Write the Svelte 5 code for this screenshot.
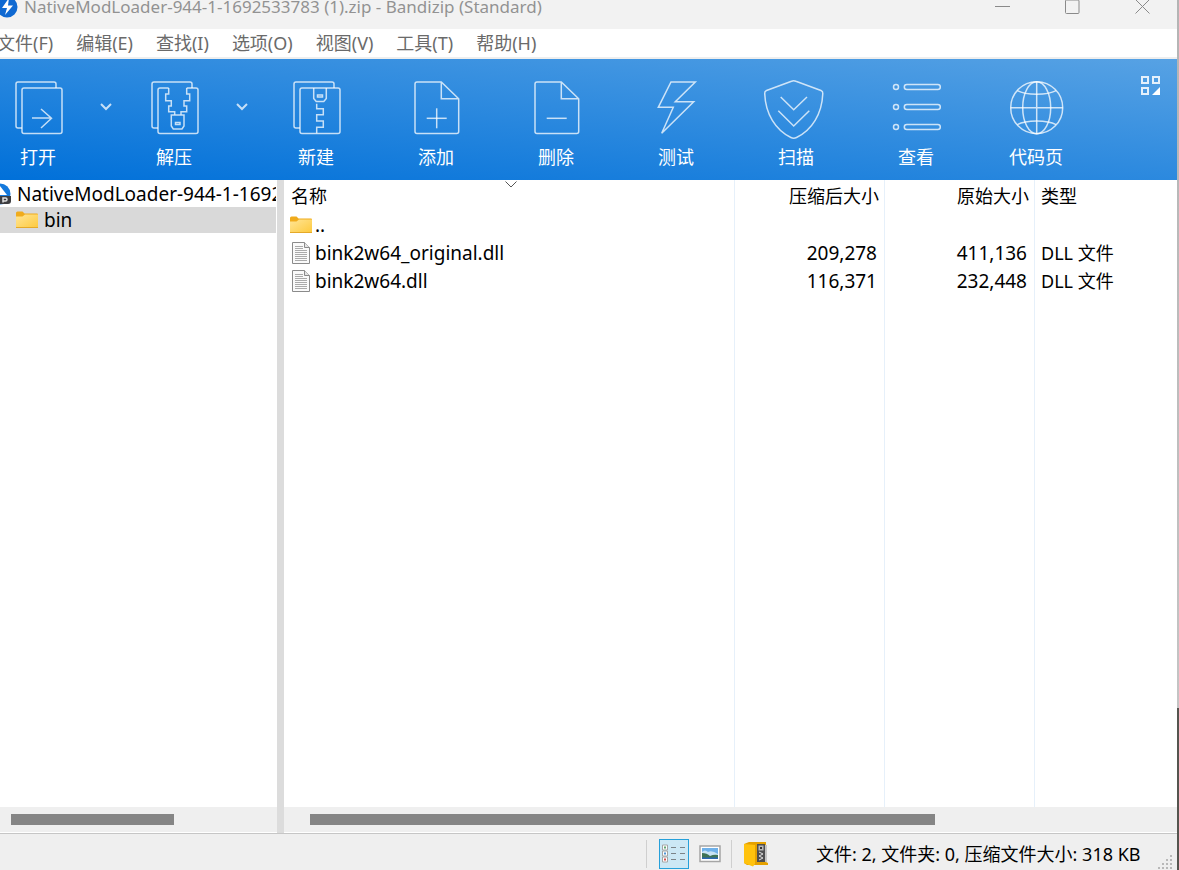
<script lang="ts">
    // ArchiveWindow: main window of the archiver. Toolbar on top,
    // folder tree on the left, archive entries on the right.

    type Entry = {
        name: string;
        kind: 'up' | 'file';
        packed: string;
        size: string;
        type: string;
    };

    const title = 'NativeModLoader-944-1-1692533783 (1).zip - Bandizip (Standard)';
    const menus = ['文件(F)', '编辑(E)', '查找(I)', '选项(O)', '视图(V)', '工具(T)', '帮助(H)'];

    const tools = [
        { id: 'open', label: '打开', menu: true },
        { id: 'extract', label: '解压', menu: true },
        { id: 'new', label: '新建', menu: false },
        { id: 'add', label: '添加', menu: false },
        { id: 'delete', label: '删除', menu: false },
        { id: 'test', label: '测试', menu: false },
        { id: 'scan', label: '扫描', menu: false },
        { id: 'view', label: '查看', menu: false },
        { id: 'codepage', label: '代码页', menu: false }
    ];

    const entries: Entry[] = [
        { name: '..', kind: 'up', packed: '', size: '', type: '' },
        { name: 'bink2w64_original.dll', kind: 'file', packed: '209,278', size: '411,136', type: 'DLL 文件' },
        { name: 'bink2w64.dll', kind: 'file', packed: '116,371', size: '232,448', type: 'DLL 文件' }
    ];

    let viewMode = $state<'list' | 'image'>('list');
    let folder = $state('bin');
</script>

{#snippet folderIcon()}
    <svg class="folder" width="22" height="18" viewBox="0 0 22 18" aria-hidden="true">
        <defs>
            <linearGradient id="folder-fill" x1="0" y1="0" x2="1" y2="1">
                <stop offset="0" stop-color="#ffe596" />
                <stop offset="1" stop-color="#fdc93c" />
            </linearGradient>
        </defs>
        <path d="M0 2a1.5 1.5 0 0 1 1.5-1.5h5L8.5 2.5H21a1 1 0 0 1 1 1V8H0z" fill="#f0ab1c" />
        <path d="M0 5.5h6.500L9 3.500h13V16a1 1 0 0 1-1 1H1a1 1 0 0 1-1-1z" fill="url(#folder-fill)" />
        <path d="M0 16.5h22" stroke="#e5a928" />
    </svg>
{/snippet}

{#snippet fileIcon()}
    <svg class="file" width="18" height="22" viewBox="0 0 18 22" aria-hidden="true">
        <path d="M.5.5h12l5 5v16H.5z" fill="#fafafa" stroke="#8b8b8b" />
        <path d="M12.5.5v5h5" fill="#e4e4e4" stroke="#8b8b8b" />
        <path d="M3 4.5h8M3 6.5h8M3 8.5h12M3 10.5h12M3 12.5h12M3 14.5h12M3 16.5h12M3 18.5h12" stroke="#aaa" />
    </svg>
{/snippet}

{#snippet toolIcon(id: string)}
    <svg class="tool-icon" width="60" height="60" viewBox="0 0 60 60" aria-hidden="true">
        {#if id === 'open' || id === 'extract' || id === 'new'}
            <path d="M14 50H10a2 2 0 0 1-2-2V6a2 2 0 0 1 2-2h36a2 2 0 0 1 2 2v4" />
        {/if}
        {#if id === 'open'}
            <rect x="14" y="10" width="40" height="45.5" rx="2" />
            <path d="M24 40h19.5M33 31l10.5 9.3L33 50" />
        {:else if id === 'extract'}
            <path d="M24.7 10H16a2 2 0 0 0-2 2v41.5a2 2 0 0 0 2 2h36a2 2 0 0 0 2-2V12a2 2 0 0 0-2-2h-9.3" />
            <path d="M24.7 10v6h-3v6.7h5.6V28h-2.6v5.7h6v3M42.7 10v6h3v6.7H40V28h2.7v5.7H37v3" />
            <path d="M27.3 37H40v11l-2 3h-8.7l-2-3z" />
            <rect x="31.5" y="44.5" width="4.5" height="2" />
        {:else if id === 'new'}
            <rect x="14" y="10" width="40" height="45.5" rx="2" />
            <path d="M27.7 10v10.5l2.5 3h7.6l2.5-3V10" />
            <rect x="31.5" y="17" width="5" height="2" />
            <path d="M30.7 25.7v5h6.6v6h-6.6V43h6.6v6.3h-6.6v6" />
        {:else if id === 'add' || id === 'delete'}
            <path d="M35.3 4H11a2 2 0 0 0-2 2v47.5a2 2 0 0 0 2 2h39.7a2 2 0 0 0 2-2V20.7zV20.7h17.4" />
            <path d="M20.7 40.3h20" />
            {#if id === 'add'}<path d="M30.7 30.3v20" />{/if}
        {:else if id === 'test'}
            <path d="M25 4h24.3l-20 19.7h18.4l-32 31.6 11.6-26h-15z" />
        {:else if id === 'scan'}
            <path d="M25.5 3.2q2.200-1 4.400 0L55 12.5q2 .8 1.8 3C56 36 46 52 30.5 59.5q-2.800 1.400-5.600 0C9.5 52-.5 36-1.300 15.5q-.2-2.200 1.800-3z" />
            <path d="M14.7 19l13 12.7L41 19M12.3 32.7L27.7 48l15.6-15.3" />
        {:else if id === 'view'}
            {#each [9, 29, 49] as y}
                <circle cx="10" cy={y} r="2.5" />
                <rect x="18.3" y={y - 2.5} width="36" height="5" rx="2.5" />
            {/each}
        {:else if id === 'codepage'}
            <circle cx="30.7" cy="29.7" r="26" />
            <path d="M30.7 3.7v52M4.7 29.7h52" />
            <ellipse cx="30.7" cy="29.7" rx="14" ry="26" />
            <path d="M11.3 12.7c9 4.8 29.8 4.8 38.8 0M11.3 46.7c9-4.800 29.8-4.800 38.8 0" />
        {/if}
    </svg>
{/snippet}

<div class="desktop">
    <main class="window">
        <header class="titlebar">
            <svg class="logo" width="22" height="22" viewBox="0 0 22 22" aria-hidden="true">
                <circle cx="11" cy="11" r="10.5" fill="#0f69d2" />
                <path d="M13 2L6 12h5l-2 7 8-9.500h-5z" fill="#fff" />
            </svg>
            <h1>{title}</h1>
            <div class="caption">
                <button aria-label="最小化">
                    <svg width="16" height="16" viewBox="0 0 16 16"><path d="M0 7.5h15" /></svg>
                </button>
                <button aria-label="最大化">
                    <svg width="16" height="16" viewBox="0 0 16 16"><rect x=".5" y="1" width="13.5" height="13.5" rx="1" /></svg>
                </button>
                <button aria-label="关闭">
                    <svg width="16" height="16" viewBox="0 0 16 16"><path d="M.5.5l14 14M14.5.5l-14 14" /></svg>
                </button>
            </div>
        </header>

        <nav class="menubar">
            {#each menus as m}
                <button>{m}</button>
            {/each}
        </nav>

        <div class="toolbar" role="toolbar" aria-label="工具">
            {#each tools as t (t.id)}
                <button class="tool" class:split={t.menu}>
                    {@render toolIcon(t.id)}
                    <span>{t.label}</span>
                </button>
                {#if t.menu}
                    <button class="drop" aria-label={t.label + '菜单'}>
                        <svg width="12" height="8" viewBox="0 0 12 8"><path d="M1 1l5 5 5-5" /></svg>
                    </button>
                {/if}
            {/each}
            <button class="layout" aria-label="布局">
                <svg width="20" height="20" viewBox="0 0 20 20">
                    <path d="M1 1h6v6H1zM12 1h6v6h-6zM1 12h6v6H1z" />
                    <path class="solid" d="M19 11v8h-8z" />
                </svg>
            </button>
        </div>

        <div class="panes">
            <section class="pane tree-pane">
                <ul class="tree">
                    <li>
                        <button onclick={() => (folder = '')}>
                            <svg class="zip" width="22" height="22" viewBox="0 0 22 22" aria-hidden="true">
                                <circle cx="11" cy="11" r="10.5" fill="#1479dc" />
                                <path d="M11 3l7 9h-7z" fill="#fff" />
                                <path d="M0 13h22v5a3 3 0 0 1-3 3H3a3 3 0 0 1-3-3z" fill="#3d3d40" />
                                <path d="M14 19.5v-4.500h2.500a1.5 1.5 0 0 1 0 3H14" fill="none" stroke="#ddd" stroke-width="1.5" />
                            </svg>
                            <span>NativeModLoader-944-1-1692533783 (1).zip</span>
                        </button>
                    </li>
                    <li>
                        <button class="child" class:selected={folder === 'bin'} onclick={() => (folder = 'bin')}>
                            {@render folderIcon()}
                            <span>bin</span>
                        </button>
                    </li>
                </ul>
                <div class="scroll tree-scroll"><div class="thumb"></div></div>
            </section>

            <div class="splitter"></div>

            <section class="pane list-pane">
                <div class="list">
                    <table>
                        <thead>
                            <tr>
                                <th class="name">
                                    名称
                                    <svg class="sort" width="12" height="7" viewBox="0 0 12 7" aria-hidden="true"><path d="M.5.5L6 6 11.5.5" /></svg>
                                </th>
                                <th class="num">压缩后大小</th>
                                <th class="num">原始大小</th>
                                <th class="type">类型</th>
                            </tr>
                        </thead>
                        <tbody>
                            {#each entries as e (e.name)}
                                <tr>
                                    <td class="name">
                                        <div class="entry">
                                            {#if e.kind === 'up'}{@render folderIcon()}{:else}{@render fileIcon()}{/if}
                                            <span>{e.name}</span>
                                        </div>
                                    </td>
                                    <td class="num">{e.packed}</td>
                                    <td class="num">{e.size}</td>
                                    <td class="type">{e.type}</td>
                                </tr>
                            {/each}
                            <!-- stretches so the column rules reach the scrollbar -->
                            <tr class="filler"><td></td><td></td><td></td><td></td></tr>
                        </tbody>
                    </table>
                </div>
                <div class="scroll list-scroll"><div class="thumb"></div></div>
            </section>
        </div>

        <footer class="status">
            <div class="modes">
                <button class:active={viewMode === 'list'} aria-label="列表" onclick={() => (viewMode = 'list')}>
                    <svg width="26" height="24" viewBox="0 0 26 24">
                        <path d="M1.5 3h5v5h-5zM1.5 9h5v5h-5zM1.5 15h5v5h-5z" fill="#fff" stroke="#a4a4a4" />
                        <path d="M3 5.5h2" stroke="#62a370" stroke-width="2" />
                        <path d="M3 11.5h2" stroke="#4e95d6" stroke-width="2" />
                        <path d="M3 17.5h2" stroke="#d34f4c" stroke-width="2" />
                        <path d="M10 5.5h5M19 5.5h5M10 11.5h5M19 11.5h5M10 17.5h5M19 17.5h5" stroke="#7b8388" />
                    </svg>
                </button>
                <button class:active={viewMode === 'image'} aria-label="图片" onclick={() => (viewMode = 'image')}>
                    <svg width="22" height="18" viewBox="0 0 22 18">
                        <rect x="1" y="1" width="20" height="15.5" fill="#fff" stroke="#a5a5a5" stroke-width="1.5" />
                        <path d="M3 3h16v11H3z" fill="#6fb1ea" />
                        <path d="M3 7q3-3 6 0 4-2 10 2v2H3z" fill="#c8e3f5" />
                        <path d="M3 8q5 0 8 3 4-2 8-1v4H3z" fill="#3f7356" />
                        <path d="M3 12.5h16V14H3z" fill="#2a67b4" />
                    </svg>
                </button>
            </div>
            <button class="archive" aria-label="压缩包">
                <svg width="26" height="26" viewBox="0 0 26 26">
                    <path d="M1 3l5-2h17v20l2 1v2H4L1 22z" fill="#e5a100" />
                    <path d="M14 3h8v18h-8z" fill="#4e4e50" />
                    <path d="M15.5 4.500h5v5h-5z" fill="#b8b8b8" />
                    <path d="M17 6h2v2h-2z" fill="#333" />
                    <path d="M16 11l4 2-4 2 4 2-4 2" fill="none" stroke="#ddd" />
                    <path d="M22 4h2v17h-2z" fill="#c4c4c4" />
                    <path d="M1 3l11 1v19l-2 2.5L1 22z" fill="#ffc20d" />
                </svg>
            </button>
            <p>文件: 2, 文件夹: 0, 压缩文件大小: 318 KB</p>
            <svg class="grip" width="16" height="16" viewBox="0 0 16 16" aria-hidden="true">
                <path d="M13 1h2v2h-2zM13 5h2v2h-2zM9 5h2v2H9zM13 9h2v2h-2zM9 9h2v2H9zM5 9h2v2H5zM13 13h2v2h-2zM9 13h2v2H9zM5 13h2v2H5zM1 13h2v2H1z" fill="#b9b9b9" />
            </svg>
        </footer>
    </main>
    <div class="edge"></div>
</div>

<style>
    :global(body) {
        background: #efefef;
        overflow: hidden;
    }

    .desktop {
        display: grid;
        grid-template-columns: minmax(0, 1fr) 2px;
        height: 100vh;
        font-family: 'Noto Sans', 'Noto Sans CJK SC', sans-serif;
        font-size: 18px;
        line-height: 26px;
        color: #000;
    }
    .edge {
        background: linear-gradient(#b4b4b4 0, #c4c4c4 708px, #55554f 708px);
    }
    .window {
        display: flex;
        flex-direction: column;
        min-height: 0;
        background: #fff;
    }

    button {
        padding: 0;
        border: 0;
        background: none;
        color: inherit;
        font: inherit;
    }
    svg {
        display: block;
        flex-shrink: 0;
    }

    /* ---------- title bar, menu ---------- */
    .titlebar {
        display: flex;
        align-items: center;
        height: 14px;
        padding-bottom: 15px;
        overflow: hidden;
        background: #f2f2f2;
        color: #929292;
    }
    .logo {
        margin-left: -4px;
    }
    h1 {
        margin: 0 0 0 6px;
        font-size: 17px;
        font-weight: 400;
        white-space: nowrap;
    }
    .caption {
        display: flex;
        gap: 54px;
        margin-left: auto;
        margin-right: 26px;
    }
    .caption svg {
        fill: none;
        stroke: #8a8a8a;
    }
    .menubar {
        display: flex;
        gap: 23px;
        height: 28px;
        padding-bottom: 2px;
        margin-left: -3px;
        background: linear-gradient(to top, #eee 2px, #fff 2px);
        box-sizing: content-box;
        color: #6a6a6a;
    }

    /* ---------- toolbar ---------- */
    .toolbar {
        display: flex;
        height: 121px;
        background: linear-gradient(to top right, #0070d9, #57a2e4);
        color: #fff;
    }
    .tool {
        display: flex;
        flex-direction: column;
        align-items: center;
        gap: 6px;
        width: 88px;
        margin-right: 32px;
        padding-top: 19px;
    }
    .tool.split {
        width: 76px;
        margin-right: 0;
    }
    .tool-icon {
        overflow: visible;
        fill: none;
        stroke: #fff;
        stroke-opacity: 0.75;
        stroke-width: 1.5;
    }
    .drop {
        display: flex;
        justify-content: center;
        width: 60px;
        padding-top: 44px;
    }
    .drop svg {
        fill: none;
        stroke: #c6dff6;
        stroke-width: 2;
    }
    .layout {
        display: flex;
        margin-left: auto;
        padding: 17px 16px 0 0;
    }
    .layout svg {
        fill: none;
        stroke: #e4f0fb;
        stroke-width: 2;
    }
    .layout .solid {
        fill: #fff;
        stroke: none;
    }

    /* ---------- panes ---------- */
    .panes {
        display: grid;
        grid-template-columns: 277px 7px minmax(0, 1fr);
        flex: 1;
        min-height: 0;
        border-bottom: 1px solid #c6c6c6;
    }
    .pane {
        display: flex;
        flex-direction: column;
        min-width: 0;
        min-height: 0;
    }
    .splitter {
        background: #dcdcdc;
    }
    .tree {
        flex: 1;
        margin: 0;
        padding: 1px 1px 0 0;
        list-style: none;
        overflow: hidden;
        font-size: 19px;
    }
    .tree button {
        display: flex;
        align-items: center;
        gap: 6px;
        width: 100%;
        height: 26px;
        overflow: hidden;
        white-space: nowrap;
    }
    .tree span {
        min-width: 0;
        overflow: hidden;
    }
    .tree .zip {
        margin-left: -11px;
    }
    .tree .child {
        padding-left: 16px;
    }
    .tree .selected {
        background: #d9d9d9;
    }

    .scroll {
        height: 11px;
        padding: 7px 0;
        background: #efefef;
        border-bottom: 1px solid #fff;
    }
    .thumb {
        height: 11px;
        background: #858585;
    }
    .tree-scroll .thumb {
        width: 163px;
        margin-left: 11px;
    }
    .list-scroll .thumb {
        width: 70%;
        margin-left: 26px;
    }

    /* ---------- entries ---------- */
    .list {
        flex: 1;
        min-height: 0;
    }
    table {
        width: 100%;
        height: 100%;
        table-layout: fixed;
        border-collapse: separate;
        border-spacing: 0;
    }
    th,
    td {
        height: 28px;
        padding: 0;
        border-right: 1px solid #e6f0fa;
        font-weight: 400;
        white-space: nowrap;
        text-align: left;
    }
    th:last-child,
    td:last-child {
        border-right: 0;
    }
    th {
        position: relative;
        height: 31px;
    }
    th.name {
        width: 443px;
        padding-left: 7px;
    }
    td.name {
        padding-left: 6px;
        font-size: 19px;
    }
    th.num {
        width: 144px;
    }
    .num {
        padding-right: 5px;
        text-align: right;
    }
    td.num {
        padding-right: 7px;
        font-size: 19px;
    }
    .type {
        padding-left: 6px;
    }
    .filler td {
        height: auto;
    }
    .entry {
        display: flex;
        align-items: center;
        gap: 3px;
    }
    .file {
        margin: 0 2px;
    }
    .sort {
        position: absolute;
        top: 1px;
        left: 49%;
        fill: none;
        stroke: #555;
    }

    /* ---------- status bar ---------- */
    .status {
        display: flex;
        align-items: center;
        box-sizing: border-box;
        height: 36px;
        padding-top: 4px;
        background: #efefef;
    }
    .modes {
        display: flex;
        align-items: center;
        gap: 6px;
        height: 28px;
        margin-left: auto;
        padding: 0 6px 0 12px;
        border: solid #cfcfcf;
        border-width: 0 1px;
    }
    .modes button {
        display: flex;
        align-items: center;
        justify-content: center;
        box-sizing: border-box;
        width: 30px;
        height: 30px;
    }
    .modes .active {
        background: #cce8f5;
        border: 1px solid #26a0da;
    }
    .archive {
        margin-left: 11px;
    }
    .status p {
        min-width: 325px;
        margin: 0 0 0 47px;
        white-space: nowrap;
    }
    .grip {
        align-self: flex-end;
        margin: 0 4px 0 16px;
    }
</style>
